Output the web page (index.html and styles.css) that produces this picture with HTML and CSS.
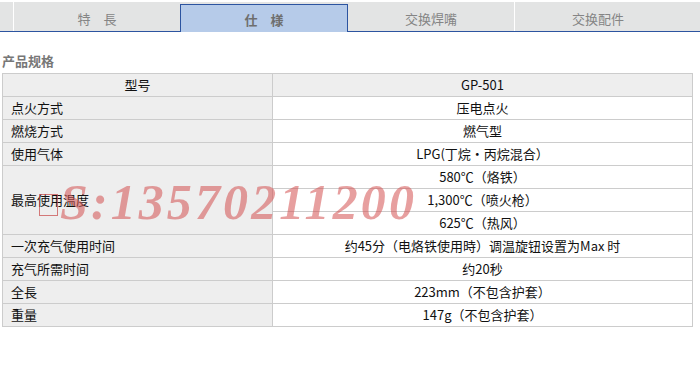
FILE: index.html
```html
<!DOCTYPE html>
<html lang="zh">
<head>
<meta charset="utf-8">
<link rel="stylesheet" href="styles.css">
</head>
<body>
<div class="page">
  <div class="tabs">
    <div class="tab sep">特　長</div>
    <div class="tab active">仕　様</div>
    <div class="tab">交换焊嘴</div>
    <div class="tab sep">交换配件</div>
  </div>
  <h3 class="title">产品规格</h3>
  <table class="spec">
    <tr class="head"><td class="label center">型号</td><td>GP-501</td></tr>
    <tr><td class="label">点火方式</td><td>压电点火</td></tr>
    <tr><td class="label">燃烧方式</td><td>燃气型</td></tr>
    <tr><td class="label">使用气体</td><td>LPG(丁烷・丙烷混合）</td></tr>
    <tr><td class="label" rowspan="3">最高使用温度</td><td>580℃（烙铁）</td></tr>
    <tr><td>1,300℃（喷火枪）</td></tr>
    <tr><td>625℃（热风）</td></tr>
    <tr><td class="label">一次充气使用时间</td><td>约45分（电烙铁使用時）调温旋钮设置为Max 时</td></tr>
    <tr><td class="label">充气所需时间</td><td>约20秒</td></tr>
    <tr><td class="label">全長</td><td>223mm（不包含护套）</td></tr>
    <tr><td class="label">重量</td><td>147g（不包含护套）</td></tr>
  </table>
  <div class="watermark"><span class="tofu"></span><span class="wm-text">S:13570211200</span></div>
</div>
</body>
</html>
```
FILE: styles.css
```css
html, body {
  margin: 0;
  padding: 0;
  background: #fff;
}
body {
  font-family: "Noto Sans CJK SC", "Noto Sans", sans-serif;
  font-size: 13px;
  color: #111;
}
.page {
  position: relative;
  width: 700px;
  height: 370px;
}
.tabs {
  display: flex;
  margin-top: 2px;
  height: 29px;
  width: 697px;
  padding-left: 13px;
  box-sizing: content-box;
  background: #e3e4e4;
  border-bottom: 1px solid #2c54a0;
}
.tab {
  width: 166px;
  display: flex;
  align-items: center;
  justify-content: center;
  padding-top: 3px;
  box-sizing: border-box;
  color: #858585;
  font-size: 13px;
}
.tab.sep {
  border-left: 1px solid #fff;
  width: 167px;
}
.tab.active {
  width: 168px;
  margin-top: 2px;
  margin-bottom: -1px;
  padding-top: 1px;
  background: #b6cbe9;
  border: 1px solid #2c54a0;
  border-bottom: none;
  color: #6e6e6e;
  font-weight: bold;
}
.title {
  margin: 20px 0 0 2px;
  height: 21px;
  font-size: 13px;
  font-weight: bold;
  color: #777;
  line-height: 18px;
}
.spec {
  margin-left: 2px;
  width: 691px;
  border-collapse: collapse;
  table-layout: fixed;
}
.spec td {
  border: 1px solid #cccccc;
  height: 22px;
  padding: 0;
  text-align: center;
  line-height: 16px;
  background: #fff;
}
.spec td.label {
  width: 269px;
  text-align: left;
  padding-left: 8px;
  background: #eeeeee;
}
.spec td.label.center {
  text-align: center;
  padding-left: 0;
}
.spec tr.head td {
  background: #eeeeee;
}
.watermark {
  position: absolute;
  left: 39px;
  top: 174px;
  display: flex;
  align-items: flex-end;
  pointer-events: none;
}
.tofu {
  width: 17px;
  height: 20px;
  border: 1px solid rgba(200, 70, 70, 0.7);
  margin-bottom: 12px;
  margin-right: 2px;
}
.wm-text {
  font-family: "Liberation Serif", serif;
  font-style: italic;
  font-weight: bold;
  font-size: 50px;
  line-height: 52px;
  letter-spacing: 3.1px;
  color: rgba(212, 80, 80, 0.55);
}
```
